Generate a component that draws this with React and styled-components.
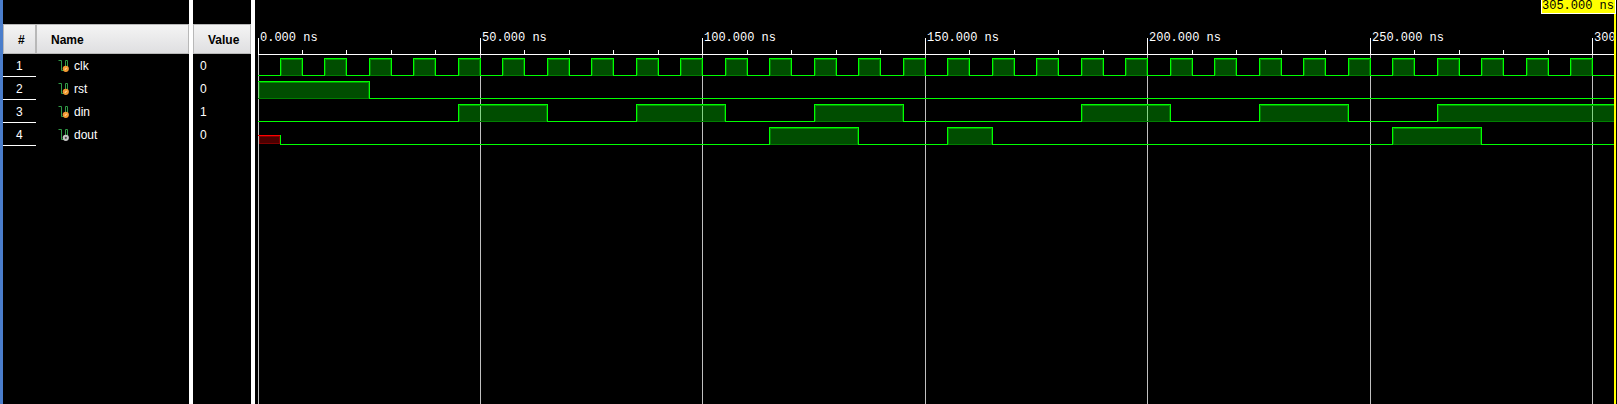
import React from "react";
import styled, { createGlobalStyle } from "styled-components";

const PX_PER_NS = 4.4495;
const ORIGIN = 3;
const END_NS = 305;
const ROW = 23;

const at = (ns) => ORIGIN + Math.floor(ns * PX_PER_NS);

const clock = Array.from({ length: 30 }, (_, i) => [5 + i * 10, 10 + i * 10]);

const signals = [
  { name: "clk", value: "0", dir: "in", high: clock },
  { name: "rst", value: "0", dir: "in", high: [[0, 25]] },
  {
    name: "din",
    value: "1",
    dir: "in",
    high: [[45, 65], [85, 105], [125, 145], [185, 205], [225, 245], [265, END_NS]],
  },
  {
    name: "dout",
    value: "0",
    dir: "out",
    unknown: [0, 5],
    high: [[115, 135], [155, 165], [255, 275]],
  },
];

const GlobalStyle = createGlobalStyle`
  * { box-sizing: border-box; }
  body { margin: 0; background: #000; }
`;

const Window = styled.main`
  display: flex;
  min-height: 100vh;
  overflow: hidden;
  background: #000;
  border-left: 3px solid #4a7dcb;
  color: #fff;
  font: 12px/20px "Liberation Sans", Arial, sans-serif;
`;

const Panel = styled.section`
  flex: none;
  width: ${(p) => p.$width}px;
  padding-top: 24px;
  border-right: 4px solid #fff;
`;

const Table = styled.table`
  width: 100%;
  border-collapse: separate;
  border-spacing: 0;
  table-layout: fixed;
`;

const HeadCell = styled.th`
  width: ${(p) => (p.$width ? `${p.$width}px` : "auto")};
  height: 30px;
  padding: 2px 0 0 ${(p) => p.$indent}px;
  border: 1px solid #b8b8b8;
  background: linear-gradient(#f4f4f4, #dfdfe1);
  color: #000;
  font-weight: bold;
  text-align: left;
`;

const Cell = styled.td`
  height: ${ROW}px;
  padding: 2px 0 0 ${(p) => p.$indent}px;
  border-bottom: 1px solid ${(p) => (p.$ruled ? "#fff" : "transparent")};
`;

const SignalName = styled.span`
  display: flex;
  align-items: center;
  gap: 4px;
`;

const WaveArea = styled.section`
  position: relative;
  flex: 1;
  min-width: 0;
  overflow: hidden;
`;

const Waves = styled.svg`
  display: block;
  width: 100%;
  height: 100%;
  shape-rendering: crispEdges;

  text {
    fill: #fff;
    font: 12px "Liberation Mono", "Courier New", monospace;
  }
`;

const CursorLabel = styled.output`
  position: absolute;
  top: 0;
  right: 1px;
  height: 14px;
  padding-right: 1px;
  border: solid #fff;
  border-width: 0 1px 1px;
  background: #ff0;
  color: #000;
  font: 12px/12px "Liberation Mono", "Courier New", monospace;
  white-space: pre;
`;

function SignalIcon({ dir }) {
  const input = dir === "in";
  return (
    <svg width="12" height="12" viewBox="0 0 12 12" aria-hidden="true">
      <path d="M0.5 0.5H3.5V10.5H7.5V0.5H9.5V7" fill="none" stroke="#2f9a45" />
      <circle cx="7.8" cy="8.8" r="3.1" fill={input ? "#f39a32" : "#c4c4c4"} />
      {input ? (
        <path d="M7 9.8L8.6 7.8" stroke="#fff0c8" />
      ) : (
        <circle cx="7.8" cy="8.8" r="1.1" fill="#444" />
      )}
    </svg>
  );
}

function Pulse({ from, to, top }) {
  const x = at(from);
  const w = at(to) - x;
  return (
    <g>
      <rect x={x} y={top} width={w} height="17" fill="#0f0" fillOpacity="0.3" />
      <rect x={x + 1} y={top + 1} width={w - 1} height="1" fill="#009800" />
      <rect x={x + 1} y={top + 1} width="1" height="17" fill="#008000" />
      <rect x={x + w - 1} y={top + 1} width="1" height="17" fill="#008000" />
      <rect x={x} y={top + 17} width={w} height="1" fill="#008000" />
      {from > 0 && <rect x={x} y={top} width="1" height="18" fill="#0f0" />}
      <rect x={x} y={top} width={w + 1} height="1" fill="#0f0" />
      <rect x={x + w} y={top} width="1" height="18" fill="#0f0" />
    </g>
  );
}

function Trace({ signal, index }) {
  const top = 58 + index * ROW;
  const base = top + 17;
  const start = signal.unknown ? signal.unknown[1] : 0;
  return (
    <g>
      <rect x={at(start)} y={base} width={at(END_NS) - at(start)} height="1" fill="#0f0" />
      {signal.unknown && (
        <g>
          <rect x={at(0) + 1} y={top + 8} width={at(start) - at(0) - 1} height="9" fill="#800000" />
          <rect x={at(0) + 2} y={top + 10} width={at(start) - at(0) - 3} height="6" fill="#4c0000" />
          <rect x={at(0)} y={top + 8} width={at(start) - at(0)} height="1" fill="#f00" />
          <rect x={at(start)} y={top + 8} width="1" height="10" fill="#0f0" />
        </g>
      )}
      {signal.high.map(([from, to]) => (
        <Pulse key={from} from={from} to={to} top={top} />
      ))}
    </g>
  );
}

function Waveform() {
  const ticks = Array.from({ length: 31 }, (_, i) => i * 10);
  const majors = ticks.filter((t) => t % 50 === 0);
  return (
    <Waves role="img" aria-label="Signal waveforms">
      {majors.map((t) => (
        <g key={t}>
          <rect x={at(t)} y="55" width="1" height="100%" fill="#c0c0c0" />
          <rect x={at(t)} y="38" width="1" height="17" fill="#fff" />
          <text x={at(t) + 2} y="41">{`${t}.000 ns`}</text>
        </g>
      ))}
      {ticks.map((t) => (
        <rect key={t} x={at(t)} y="50" width="1" height="4" fill="#fff" />
      ))}
      <rect x={at(0)} y="54" width={at(END_NS) - at(0)} height="1" fill="#fff" />
      {signals.map((s, i) => (
        <Trace key={s.name} signal={s} index={i} />
      ))}
      <rect x={at(END_NS) - 1} y="0" width="2" height="100%" fill="#ff0" />
      <rect x={at(END_NS) + 1} y="0" width="100%" height="100%" fill="#000" />
    </Waves>
  );
}

export default function App() {
  return (
    <>
      <GlobalStyle />
      <Window>
        <Panel $width={190}>
          <Table>
            <thead>
              <tr>
                <HeadCell $width={33} $indent={14}>#</HeadCell>
                <HeadCell $indent={14}>Name</HeadCell>
              </tr>
            </thead>
            <tbody>
              {signals.map((s, i) => (
                <tr key={s.name}>
                  <Cell $ruled $indent={13}>{i + 1}</Cell>
                  <Cell $indent={22}>
                    <SignalName>
                      <SignalIcon dir={s.dir} />
                      {s.name}
                    </SignalName>
                  </Cell>
                </tr>
              ))}
            </tbody>
          </Table>
        </Panel>
        <Panel $width={62}>
          <Table>
            <thead>
              <tr>
                <HeadCell $indent={14}>Value</HeadCell>
              </tr>
            </thead>
            <tbody>
              {signals.map((s) => (
                <tr key={s.name}>
                  <Cell $indent={7}>{s.value}</Cell>
                </tr>
              ))}
            </tbody>
          </Table>
        </Panel>
        <WaveArea>
          <Waveform />
          <CursorLabel>305.000 ns</CursorLabel>
        </WaveArea>
      </Window>
    </>
  );
}
